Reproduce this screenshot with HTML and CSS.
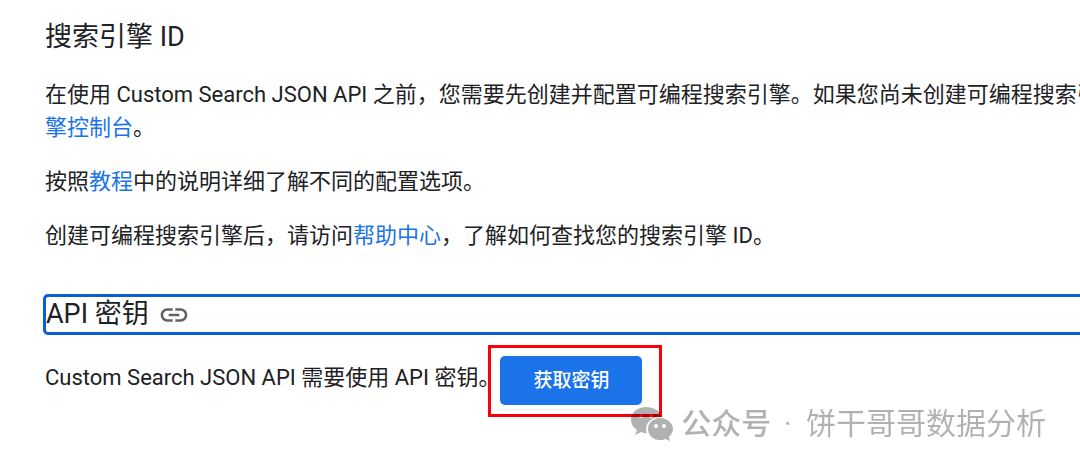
FILE: index.html
```html
<!DOCTYPE html>
<html lang="zh-CN">
<head>
<meta charset="utf-8">
<title>Custom Search JSON API</title>
<link rel="stylesheet" href="styles.css">
</head>
<body>
<main class="article">
  <h2 class="heading">搜索引擎 ID</h2>
  <p class="text">在使用 Custom Search JSON API 之前，您需要先创建并配置可编程搜索引擎。如果您尚未创建可编程搜索引<br><a class="link" href="#console">擎控制台</a>。</p>
  <p class="text">按照<a class="link" href="#tutorial">教程</a>中的说明详细了解不同的配置选项。</p>
  <p class="text">创建可编程搜索引擎后，请访问<a class="link" href="#help">帮助中心</a>，了解如何查找您的搜索引擎 ID。</p>
  <h2 class="heading focused" id="api-key">API 密钥
    <a class="anchor" href="#api-key" aria-label="链接"><svg viewBox="0 0 24 24"><path d="M3.9 12c0-1.71 1.39-3.1 3.1-3.1h4V7H7c-2.76 0-5 2.24-5 5s2.24 5 5 5h4v-1.9H7c-1.71 0-3.1-1.39-3.1-3.1zM8 13h8v-2H8v2zm9-6h-4v1.9h4c1.71 0 3.1 1.39 3.1 3.1s-1.39 3.1-3.1 3.1h-4V17h4c2.76 0 5-2.24 5-5s-2.24-5-5-5z"/></svg></a>
  </h2>
  <div class="key-row">
    <p class="text">Custom Search JSON API 需要使用 API 密钥。</p>
    <div class="callout"><button class="button" type="button">获取密钥</button></div>
  </div>
</main>
<div class="watermark">
  <svg class="wechat" viewBox="0 0 42 36">
    <mask id="back-cut"><rect width="42" height="36" fill="#fff"/><ellipse cx="29" cy="23" rx="14" ry="12" fill="#000"/><circle cx="10" cy="10" r="2" fill="#000"/><circle cx="20" cy="10" r="2" fill="#000"/></mask>
    <mask id="front-cut"><rect width="42" height="36" fill="#fff"/><circle cx="25" cy="20" r="2" fill="#000"/><circle cx="33" cy="20" r="2" fill="#000"/></mask>
    <path mask="url(#back-cut)" d="M15 1C7 1 0 6 0 14c0 4 2 7 6 10l-2 5 6-3c2 1 4 1 6 1 8 0 15-5 15-13S24 1 15 1z"/>
    <path mask="url(#front-cut)" d="M29 12c-7 0-12 5-12 11s5 11 12 11c2 0 4 0 5-1l5 2-1-4c2-2 4-5 4-8 0-6-6-11-13-11z"/>
  </svg>
  <span><span class="channel">公众号</span> <span class="dot">·</span> 饼干哥哥数据分析</span>
</div>
</body>
</html>
```
FILE: styles.css
```css
body {
  margin: 0;
  background: #fff;
  color: #202124;
  font-family: Roboto, "Noto Sans CJK SC", sans-serif;
  overflow: hidden;
}
.article { padding: 20px 0 0 45px; }
.heading {
  margin: 0 0 23px;
  font-size: 27px;
  line-height: 35px;
  font-weight: 400;
}
.text {
  margin: 0 0 21px;
  font-size: 22px;
  line-height: 33px;
  white-space: nowrap;
}
.link { color: #1a73e8; text-decoration: none; }
.focused {
  display: flex;
  align-items: center;
  gap: 9px;
  margin: 42px -8px 10px -2px;
  border: 3px solid #0b5fd3;
  border-radius: 5px;
}
.anchor { display: flex; }
.anchor svg { width: 32px; height: 32px; fill: #5f6368; }
.key-row { display: flex; align-items: flex-start; }
.key-row .text { margin: 16px 0 0; }
.callout {
  margin-left: -12px;
  border: 3px solid #fb0007;
  padding: 8px 17px 9px 9px;
}
.button {
  display: block;
  padding: 0 33px;
  border: 0;
  border-radius: 5px;
  background: #1a73e8;
  color: #fff;
  font: 500 19px/49px Roboto, "Noto Sans CJK SC", sans-serif;
}
.watermark {
  position: absolute;
  right: 34px;
  bottom: 22px;
  display: flex;
  align-items: center;
  gap: 8px;
  opacity: 0.3;
  color: #000;
  font-size: 30px;
  line-height: 42px;
  white-space: nowrap;
}
.channel { font-weight: 500; }
.dot { margin: 0 7px 0 5px; }
.wechat { width: 42px; height: 36px; }
```
